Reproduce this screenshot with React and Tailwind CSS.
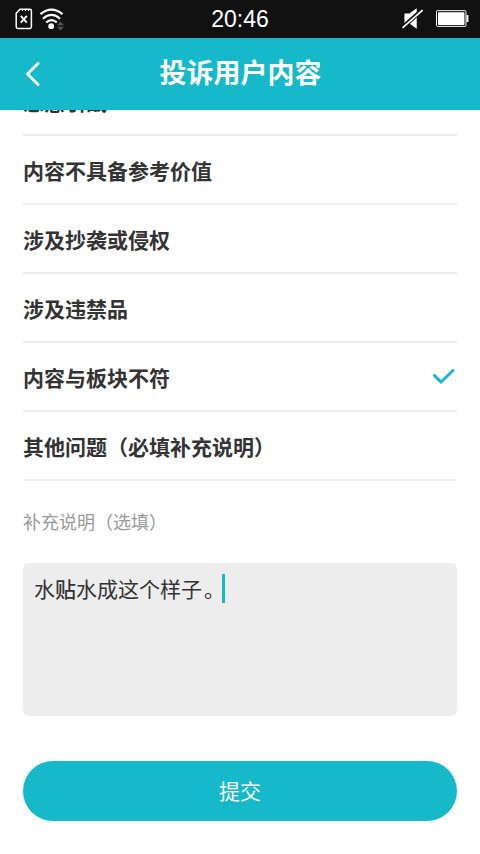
import React from 'react';

const reasons = [
  { label: '恶意引战' },
  { label: '内容不具备参考价值' },
  { label: '涉及抄袭或侵权' },
  { label: '涉及违禁品' },
  { label: '内容与板块不符', checked: true },
  { label: '其他问题（必填补充说明）' },
];

function StatusBar() {
  return (
    <div className="relative z-10 flex h-[38px] shrink-0 items-center justify-between bg-[#111111] pl-[15px] pr-[11px] text-white">
      <div className="flex w-[60px] items-center">
        <svg width="18" height="22" viewBox="0 0 18 22" fill="none" stroke="currentColor">
          <path d="M1.2 5.2 5 1.2H14.8Q16.4 1.2 16.4 2.8V18.8Q16.4 20.4 14.8 20.4H2.8Q1.2 20.4 1.2 18.8Z" strokeWidth="1.5" />
          <path d="M7.5 1v2M10.5 1v2M13.5 1v2" strokeWidth="1" />
          <path d="M5.8 7.8 11.8 14.6M11.8 7.8 5.8 14.6" strokeWidth="1.9" />
        </svg>
        <svg className="ml-[6px]" width="26" height="24" viewBox="0 0 26 24" fill="none">
          <path d="M1.5 7.2Q12.5-1.8 23.5 7.2" stroke="white" strokeWidth="2.2" />
          <path d="M4 11.7Q12.5 4.2 21 11.7" stroke="white" strokeWidth="2.2" />
          <path d="M7.2 15.5Q12.5 10.9 17.8 15.5" stroke="white" strokeWidth="2.2" />
          <circle cx="12.2" cy="19.2" r="2.9" fill="white" />
          <path d="M18 18.3 21.5 14.5 25 18.3ZM18 19.7 21.5 23.5 25 19.7Z" fill="#555" />
        </svg>
      </div>
      <span className="pl-[4px] font-['Liberation_Sans',sans-serif] text-[23px] leading-none">20:46</span>
      <div className="flex w-[68px] items-center">
        <svg className="ml-px" width="22" height="22" viewBox="0 0 22 22">
          <path d="M2.5 5.5h5l7.5-5.5v21l-7.5-5.5h-5Z" fill="white" />
          <path d="M0 20 21 1.5" stroke="#111" strokeWidth="4.4" />
          <path d="M.5 20 21 2" stroke="white" strokeWidth="1.7" />
        </svg>
        <svg className="ml-[12px]" width="34" height="18" viewBox="0 0 34 18">
          <rect x=".5" y=".5" width="30" height="16" rx="1" fill="none" stroke="white" />
          <rect x="2" y="2" width="27" height="13" rx="1" fill="white" />
          <path d="M31 5h2v7h-2Z" fill="white" />
        </svg>
      </div>
    </div>
  );
}

export default function App() {
  return (
    <div className="flex h-[854px] w-[480px] flex-col overflow-hidden bg-white font-['Noto_Sans_CJK_SC',sans-serif] text-[#333333]">
      <StatusBar />

      {/* Title bar */}
      <header className="relative z-10 flex h-[72px] shrink-0 items-center bg-[#15b9c9] text-white">
        <svg className="-mt-px ml-[24px]" width="18" height="26" viewBox="0 0 18 26" fill="none">
          <path d="M14 2.5 3.5 13 14 23.5" stroke="currentColor" strokeWidth="3" strokeLinecap="round" strokeLinejoin="round" />
        </svg>
        <h1 className="flex-1 pb-[4px] pr-[41px] text-center text-[27px] font-bold leading-[66px]">投诉用户内容</h1>
      </header>

      {/* Reasons, scrolled so the first row sits under the title bar */}
      <ul className="-mt-[43px] shrink-0 px-[23px]">
        {reasons.map((reason) => (
          <li key={reason.label} className="flex h-[69px] items-center justify-between border-b-2 border-[#ededed]">
            <span className="text-[21px] font-bold leading-[30px]">{reason.label}</span>
            {reason.checked && (
              <svg className="mr-[2px]" width="23" height="17" viewBox="0 0 23 17" fill="none">
                <path d="M2.5 7.5 9 14 21 2.5" stroke="#15b9c9" strokeWidth="3" strokeLinecap="round" />
              </svg>
            )}
          </li>
        ))}
      </ul>

      <p className="mt-[26px] px-[23px] text-[18px] leading-[28px] text-[#999999]">补充说明（选填）</p>

      <div className="mx-[23px] mt-[28px] flex h-[153px] shrink-0 items-start rounded-md bg-[#ededed] px-[11px] pt-[10px]">
        <span className="text-[21px] leading-[30px]">
          水<b className="font-medium">贴</b>水成这个样子<span className="relative left-[2px]">。</span>
        </span>
        <span className="-ml-px mt-px h-[29px] w-[3px] bg-[#15b9c9]" />
      </div>

      <button className="mx-[23px] mt-[45px] h-[60px] shrink-0 rounded-full bg-[#15b9c9] text-[21px] text-white">提交</button>
    </div>
  );
}
